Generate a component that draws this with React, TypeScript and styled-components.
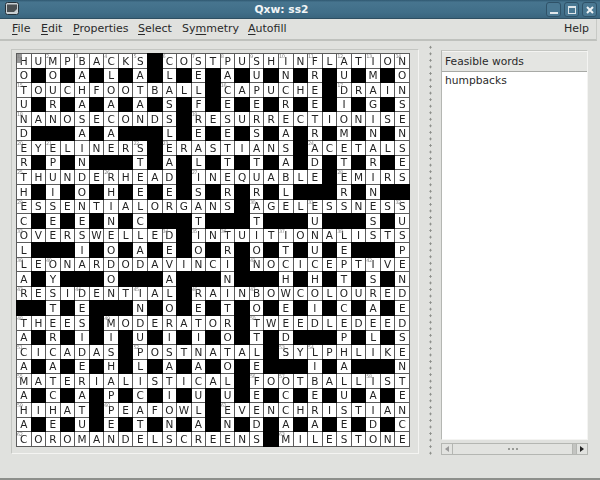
import React from "react";
import styled, { createGlobalStyle } from "styled-components";

const GlobalStyle = createGlobalStyle`
  html, body {
    margin: 0;
    padding: 0;
    background: #e0e1de;
  }
`;

const ROWS = [
  "HUMPBACKS#COSTPUSHINFLATION",
  "O#O#A#L#A#L#E#A#U#N#R#U#M#O",
  "TOUCHFOOTBALL#CAPUCHE#DRAIN",
  "U#R#A#A#A#S#F#E#E#R#E#I#G#S",
  "NANOSECONDS#RESURRECTIONISE",
  "D###A#A###L#E#E#S#A#R#M#N#N",
  "EYELINERS#ERASTIANS#ACETALS",
  "R#P#N###T#A#L#T#T#A#D#T#R#E",
  "THUNDERHEAD#INEQUABLE#EMIRS",
  "H#I#O#H#E#E#S#R#R#L###R#N##",
  "ESSENTIALORGANS#AGELESSNESS",
  "C#E#E#N#C###T###T###U###S#U",
  "OVERSWELLED#INTUITIONALISTS",
  "L###I#O#A#E#O#R#O#T#U#E###P",
  "LEONARDODAVINCI#NOCICEPTIVE",
  "A#Y###O###A###N###H#H#T#S#N",
  "RESIDENTIAL#RAINBOWCOLOURED",
  "##T#E###N#O#E#T#O#E#I#C#A#E",
  "THEES#MODERATOR#TWEEDLEDEED",
  "A#R#I#I#U#I#I#O#T#D###P#L#S",
  "CICADAS#POSTNATAL#SYLPHLIKE",
  "A#A#E#H#L#A#A#O#E###I#A###N",
  "MATERIALISTICAL#FOOTBALLIST",
  "A#C#A#P#C#I#U#U#E#C#E#U#A#E",
  "HIHAT#PEAFOWL#EVENCHRISTIAN",
  "A#E#U#E#T#N#A#N#D#A#A#E#D#C",
  "COROMANDELSCREENS#MILESTONE",
];

// clue number starts: row -> columns, numbered in reading order
const NUMBERED: Record<number, number[]> = {
  0: [0, 2, 4, 6, 8, 10, 12, 14, 16, 18, 20, 22, 24, 26],
  2: [0, 14, 22],
  4: [0, 12],
  6: [0, 2, 8, 10, 20],
  8: [0, 6, 12, 22],
  10: [0, 16, 20, 26],
  12: [0, 10, 12, 14, 18, 22],
  14: [0, 2, 16, 24],
  16: [0, 4, 8, 12, 16],
  18: [0, 6, 16],
  20: [0, 8, 18, 20],
  22: [0, 16, 18, 24],
  24: [0, 6, 14],
  26: [0, 18],
};

const numberAt = (row: number, col: number) => {
  let n = 0;
  for (const r of Object.keys(NUMBERED).map(Number)) {
    for (const c of NUMBERED[r]) {
      n++;
      if (r === row && c === col) return n;
    }
  }
  return null;
};

const Window = styled.div`
  width: 600px;
  height: 480px;
  box-sizing: border-box;
  display: flex;
  flex-direction: column;
  background: #e0e1de;
  border-bottom: 2px solid #8d8f8b;
  font-family: "DejaVu Sans", sans-serif;
  color: #2a2a2a;
  overflow: hidden;
`;

const TitleBar = styled.div`
  height: 19px;
  flex: none;
  position: relative;
  display: flex;
  align-items: center;
  justify-content: center;
  box-sizing: border-box;
  padding-right: 37px;
  background: linear-gradient(#2f5870 0, #47758f 12%, #406e88 70%, #3a657e 100%);
  border-bottom: 1px solid #2e4f62;
`;

const TitleText = styled.span`
  color: #f2f5f6;
  font-size: 10.7px;
  font-weight: bold;
`;

const AppIcon = styled.svg`
  position: absolute;
  left: 5px;
  top: 2px;
`;

const WindowButtons = styled.div`
  position: absolute;
  right: 3px;
  top: 2px;
  display: flex;
  gap: 3px;
`;

const WindowButton = styled.div`
  width: 13px;
  height: 13px;
  border: 1px solid #2f5268;
  border-radius: 3px;
  background: #4a7892;
  display: flex;
  align-items: center;
  justify-content: center;
`;

const MenuBar = styled.div`
  height: 22px;
  flex: none;
  display: flex;
  align-items: center;
  box-sizing: border-box;
  padding: 0 7px 1px 12px;
  margin-right: 3px;
  border-bottom: 2px solid #bfc1bd;
  border-right: 1px solid #c8cac6;
  font-size: 11px;
`;

const MenuItem = styled.span<{ $width?: number }>`
  width: ${(p) => (p.$width ? `${p.$width}px` : "auto")};
  flex: none;
  margin-left: ${(p) => (p.$width ? 0 : "auto")};
  u {
    text-underline-offset: 2px;
  }
`;

const Body = styled.div`
  flex: 1;
  min-height: 0;
  display: flex;
  padding: 8px 12px 0 11px;
`;

const GridFrame = styled.div`
  width: 408px;
  height: 405px;
  flex: none;
  box-sizing: border-box;
  padding: 3px 0 0 4px;
  border: 1px solid #c4c6c2;
  border-right-color: #f4f4f2;
  border-bottom-color: #f4f4f2;
`;

const Grid = styled.div`
  width: 394px;
  height: 394px;
  box-sizing: border-box;
  display: grid;
  grid-template-columns: repeat(27, 1fr);
  grid-template-rows: repeat(27, 1fr);
  gap: 1px;
  padding: 1px;
  background: #5c5c5c;
  filter: blur(0.3px);
`;

const Cell = styled.div<{ $black: boolean }>`
  position: relative;
  min-width: 0;
  min-height: 0;
  display: flex;
  align-items: center;
  justify-content: center;
  background: ${(p) => (p.$black ? "#000" : "#fff")};
  outline: ${(p) => (p.$black ? "1px solid #000" : "none")};
  font-size: 10.5px;
  line-height: 1;
  color: #222;
`;

const ClueNumber = styled.span`
  position: absolute;
  left: 0;
  top: 0;
  font-size: 5px;
  line-height: 5px;
  letter-spacing: -0.5px;
  color: #8a8a8a;
`;

const Cursor = styled.span`
  position: absolute;
  left: 0;
  top: 0;
  width: 5px;
  height: 9px;
  background: #777;
  opacity: 0.75;
`;

const Handle = styled.div`
  width: 22px;
  flex: none;
  height: 412px;
  margin-top: -5px;
  background-image: radial-gradient(circle, #8b8d89 0.9px, transparent 1.3px);
  background-size: 3px 6.55px;
  background-repeat: repeat-y;
  background-position: center top;
`;

const SidePanel = styled.div`
  width: 147px;
  flex: none;
  display: flex;
  flex-direction: column;
  height: 405px;
  margin-top: 1px;
`;

const ListBox = styled.div`
  height: 390px;
  flex: none;
  box-sizing: border-box;
  display: flex;
  flex-direction: column;
  border: 1px solid #b4b6b2;
  border-top-color: #c4c6c2;
  border-right-color: #f4f4f2;
  border-bottom-color: #f4f4f2;
`;

const ListHeader = styled.div`
  height: 21px;
  flex: none;
  display: flex;
  align-items: center;
  box-sizing: border-box;
  padding-left: 3px;
  font-size: 10.7px;
  background: #e4e5e2;
  border-bottom: 1px solid #a8aaa6;
  border-top: 1px solid #f4f4f2;
`;

const ListBody = styled.div`
  flex: 1;
  background: #fff;
  padding: 1px 3px;
  font-size: 10.7px;
  line-height: 15px;
`;

const ScrollBar = styled.div`
  height: 12px;
  margin-top: 3px;
  flex: none;
  display: flex;
  box-sizing: border-box;
  border: 1px solid #b4b6b2;
  background: #c3c4c1;
`;

const ScrollArrow = styled.div<{ $dark?: boolean }>`
  width: 10px;
  flex: none;
  display: flex;
  align-items: center;
  justify-content: center;
  background: #e2e3e0;
  color: ${(p) => (p.$dark ? "#222" : "#999")};
  border-right: 1px solid #b4b6b2;
  &:last-child {
    border-right: none;
    border-left: 1px solid #b4b6b2;
  }
`;

const ScrollThumb = styled.div`
  width: 119px;
  flex: none;
  display: flex;
  align-items: center;
  justify-content: center;
  gap: 2px;
  background: #e2e3e0;
  border-right: 1px solid #b4b6b2;
`;

const Grip = styled.span`
  width: 2px;
  height: 2px;
  background: #999b97;
`;

const ScrollTrack = styled.div`
  flex: 1;
`;

const Arrow: React.FC<{ left?: boolean }> = ({ left }) => (
  <svg width="4" height="6" viewBox="0 0 4 6">
    <path d={left ? "M4 0L0 3L4 6Z" : "M0 0L4 3L0 6Z"} fill="currentColor" />
  </svg>
);

const App: React.FC = () => {
  return (
    <>
      <GlobalStyle />
      <Window>
        <TitleBar>
          <AppIcon width="14" height="13" viewBox="0 0 14 13">
            <rect x="0.5" y="0.5" width="13" height="12" rx="2" fill="#c9cfd2" stroke="#24313a" />
            <path d="M2 2.5H12V7L9 10H2Z" fill="#4a4f52" />
          </AppIcon>
          <TitleText>Qxw: ss2</TitleText>
          <WindowButtons>
            <WindowButton>
              <svg width="8" height="8" viewBox="0 0 8 8">
                <rect x="0" y="6" width="8" height="2" fill="#dfe6ea" />
              </svg>
            </WindowButton>
            <WindowButton>
              <svg width="8" height="8" viewBox="0 0 8 8">
                <rect x="0.5" y="0.5" width="7" height="7" fill="none" stroke="#dfe6ea" />
                <rect x="0" y="0" width="8" height="2" fill="#dfe6ea" />
              </svg>
            </WindowButton>
            <WindowButton>
              <svg width="8" height="8" viewBox="0 0 8 8">
                <path d="M1 1L7 7M7 1L1 7" stroke="#eef2f4" strokeWidth="2" />
              </svg>
            </WindowButton>
          </WindowButtons>
        </TitleBar>
        <MenuBar>
          <MenuItem $width={29}><u>F</u>ile</MenuItem>
          <MenuItem $width={32}><u>E</u>dit</MenuItem>
          <MenuItem $width={65}><u>P</u>roperties</MenuItem>
          <MenuItem $width={44}><u>S</u>elect</MenuItem>
          <MenuItem $width={66}>Sy<u>m</u>metry</MenuItem>
          <MenuItem $width={48}><u>A</u>utofill</MenuItem>
          <MenuItem>Help</MenuItem>
        </MenuBar>
        <Body>
          <GridFrame>
            <Grid>
              {ROWS.map((row, r) =>
                row.split("").map((ch, c) => {
                  const black = ch === "#";
                  const n = black ? null : numberAt(r, c);
                  return (
                    <Cell key={`${r}-${c}`} $black={black}>
                      {r === 0 && c === 0 && <Cursor />}
                      {n !== null && <ClueNumber>{n}</ClueNumber>}
                      {!black && ch}
                    </Cell>
                  );
                })
              )}
            </Grid>
          </GridFrame>
          <Handle />
          <SidePanel>
            <ListBox>
              <ListHeader>Feasible words</ListHeader>
              <ListBody>humpbacks</ListBody>
            </ListBox>
            <ScrollBar>
              <ScrollArrow>
                <Arrow left />
              </ScrollArrow>
              <ScrollThumb>
                <Grip />
                <Grip />
                <Grip />
              </ScrollThumb>
              <ScrollTrack />
              <ScrollArrow $dark>
                <Arrow />
              </ScrollArrow>
            </ScrollBar>
          </SidePanel>
        </Body>
      </Window>
    </>
  );
};

export default App;
